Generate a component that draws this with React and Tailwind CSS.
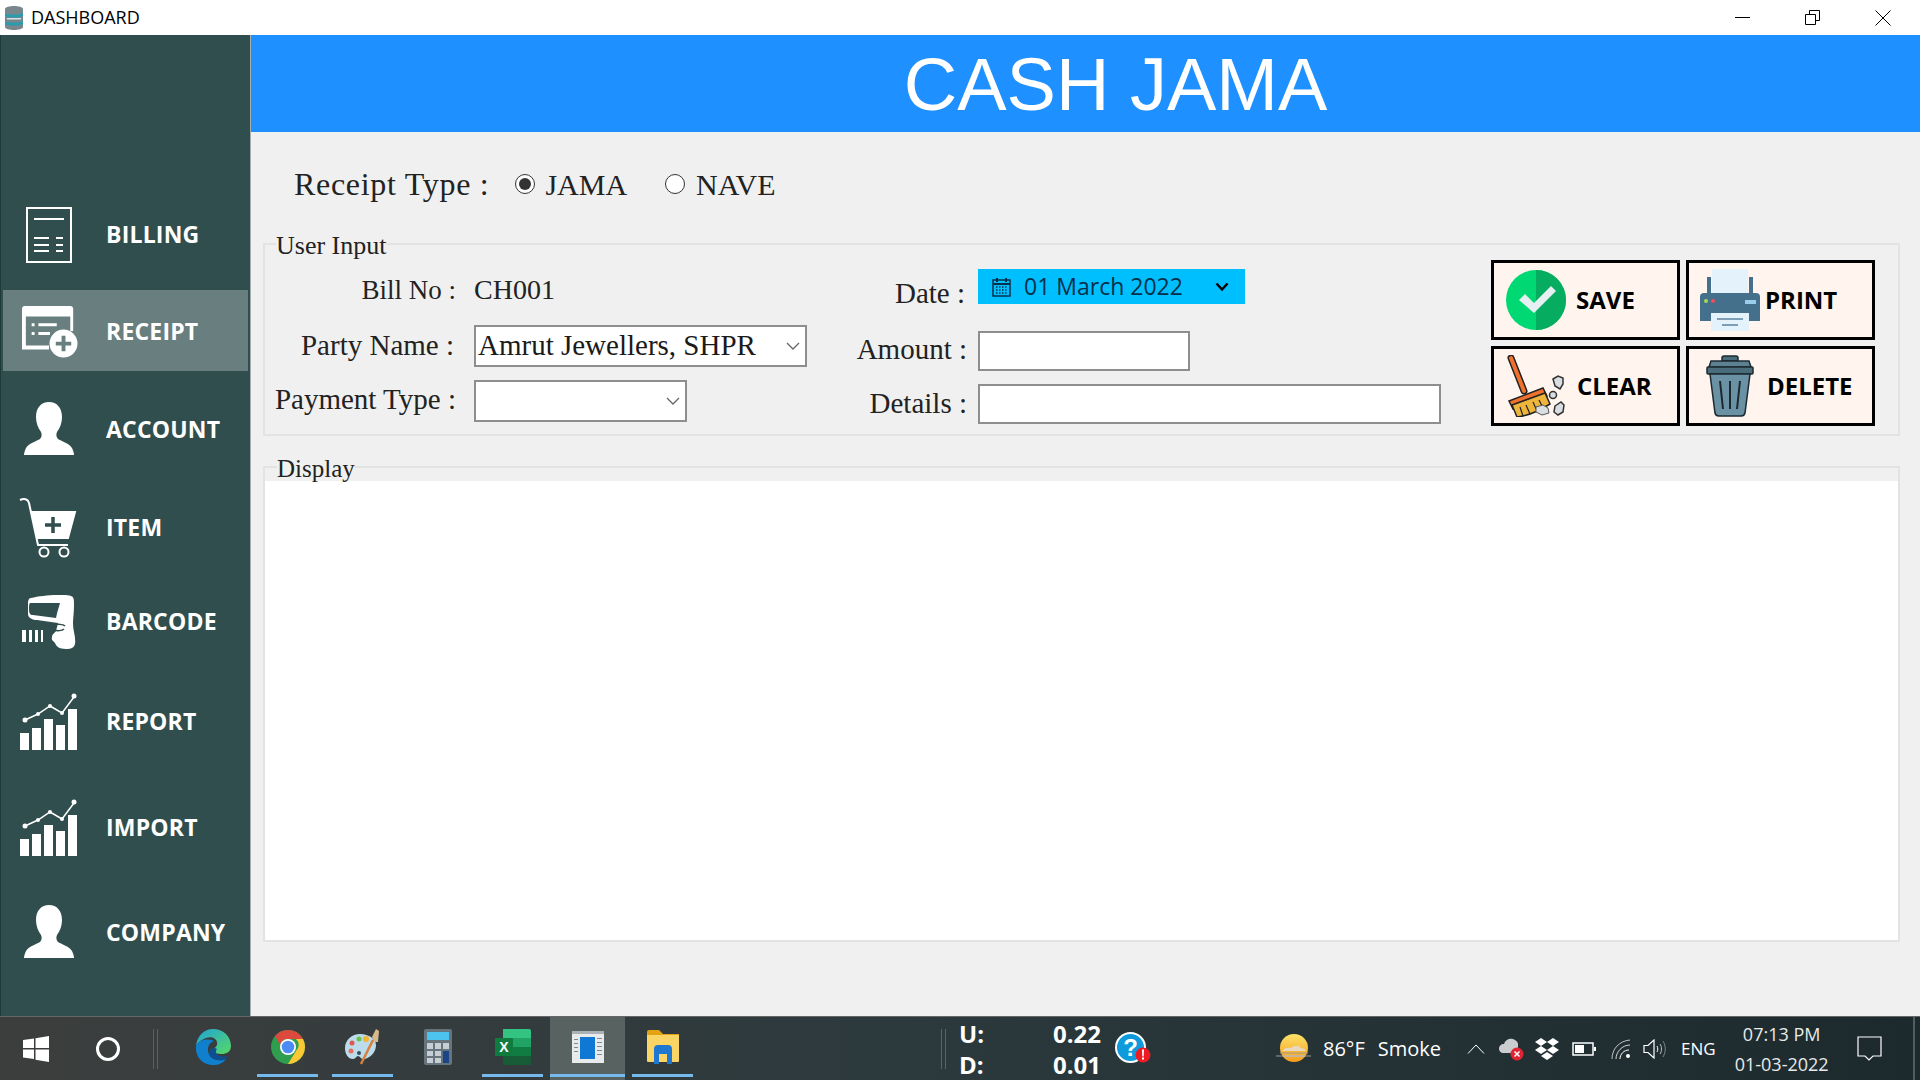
import React from 'react';

const sans = "font-['Open_Sans','Noto_Sans',sans-serif]";
const serif = "font-['Liberation_Serif',serif]";

// Sidebar icons
const BillingIcon = () => (
  <svg width="48" height="58" viewBox="0 0 48 58" fill="none" stroke="white">
    <rect x="2" y="2" width="44" height="54" strokeWidth="2" />
    <path d="M9 13h30M9 32h15M31 32h7M9 39h15M31 39h7M9 45h15M31 45h7" strokeWidth="2" />
  </svg>
);

const ReceiptIcon = () => (
  <svg className="ml-[2px]" width="56" height="54" viewBox="0 0 58 54" fill="white">
    <path d="M3 0h47a3 3 0 0 1 3 3v23h-3V11H4v30h24v4H0V3a3 3 0 0 1 3-3z" />
    <path d="M10 18h3v3h-3zM17 18h19v3H17zM10 27h3v3h-3zM17 27h12v3H17z" />
    <circle cx="43" cy="39" r="14.5" />
    <path d="M41 31h4v6h6v4h-6v6h-4v-6h-6v-4h6z" fill="#697e7e" />
  </svg>
);

const PersonIcon = () => (
  <svg className="-mt-[4px]" width="50" height="54" viewBox="0 0 50 54" fill="white">
    <path d="M25 1c8 0 13 6 13 15 0 6-2 11-5 15-1 2-1 5 1 7 3 2 11 4 14 9 1 2 2 5 2 7H0c0-2 1-5 2-7 3-5 11-7 14-9 2-2 2-5 1-7-3-4-5-9-5-15C12 7 17 1 25 1z" />
  </svg>
);

const CartIcon = () => (
  <svg width="60" height="62" viewBox="0 0 60 62" fill="none" stroke="white" strokeWidth="2">
    <path d="M1 3c4-2 8-1 9 3l9 42h30" />
    <path d="M13 15h43l-7 26H19z" fill="white" />
    <path d="M34 20v16M26 28h16" stroke="#314e4e" strokeWidth="3.5" />
    <circle cx="25" cy="55" r="4.5" />
    <circle cx="45" cy="55" r="4.5" />
  </svg>
);

const BarcodeIcon = () => (
  <svg width="56" height="54" viewBox="0 0 56 54" fill="white">
    <path d="M10 3c12-3 34-4 40-2 3 1 3 4 3 8 0 9-1 15-1 20 0 7 3 13 2 20-1 4-4 5-9 5-7 0-10-3-11-6-1-2-4-2-3-6 0-3 3-4 4-6l2-8-21-3c-4 0-9-2-9-6V8c0-3 1-5 3-5z" />
    <path d="M9 8c-1 1-1 3-1 6 0 4 1 6 4 6l23 3c1-6 3-11 4-15-8 0-22 0-30 0z" fill="#314e4e" />
    <path d="M33 30c3-1 9-1 11 1" stroke="#314e4e" strokeWidth="1.5" fill="none" />
    <path d="M33 35c3 1 8 1 10-1" stroke="#314e4e" strokeWidth="1.5" fill="none" />
    <path d="M1 35h4v12H1zM8 35h3v12H8zM14 35h3v12h-3zM20 35h2v12h-2z" />
  </svg>
);

const ChartIcon = () => (
  <svg width="60" height="58" viewBox="0 0 60 58" fill="white">
    <path d="M1 40h9v17H1zM13 35h9v22h-9zM25 26h9v31h-9zM37 32h9v25h-9zM49 16h9v41h-9z" />
    <path d="M6 27l13-6 12-8 12 7 12-16" fill="none" stroke="white" strokeWidth="1.5" />
    <circle cx="6" cy="27" r="2.5" />
    <circle cx="19" cy="21" r="2" />
    <circle cx="31" cy="13" r="2" />
    <circle cx="43" cy="20" r="2" />
    <circle cx="55" cy="3" r="2.5" />
  </svg>
);

// Button icons
const SaveIcon = () => (
  <svg width="60" height="60" viewBox="0 0 60 60">
    <circle cx="30" cy="30" r="30" fill="#00d873" />
    <path d="M30 0a30 30 0 0 1 0 60z" fill="#06ac5f" />
    <path d="M13 30l6-6 9 9 17-17 5 5-22 22z" fill="#e6f0f2" />
  </svg>
);

const PrintIcon = () => (
  <svg width="60" height="62" viewBox="0 0 60 62">
    <rect x="12" y="0" width="36" height="26" fill="#e4f2fc" />
    <path d="M7 8h4v18H7zM49 8h4v18h-4z" fill="#44708c" />
    <path d="M4 24h52a4 4 0 0 1 4 4v24H0V28a4 4 0 0 1 4-4z" fill="#44708c" />
    <rect x="45" y="31" width="11" height="4" fill="#9bcdec" />
    <circle cx="6" cy="32" r="2" fill="#a8d850" />
    <circle cx="13" cy="32" r="2" fill="#ef4d5a" />
    <rect x="11" y="44" width="38" height="18" fill="#e4f2fc" />
    <path d="M17 49h26v2H17zM22 55h16v2H22z" fill="#7d9fb6" />
  </svg>
);

const ClearIcon = () => (
  <svg width="60" height="62" viewBox="0 0 60 62">
    <path d="M5 3l13 33" stroke="#222" strokeWidth="7" strokeLinecap="round" />
    <path d="M5 3l13 33" stroke="#f0702d" strokeWidth="4" strokeLinecap="round" />
    <path d="M3 46l34-13 4 8-34 13z" fill="#f0702d" stroke="#222" strokeWidth="1.5" />
    <path d="M6 50l33-12 5 11c-8 5-22 12-33 13z" fill="#eeb53c" stroke="#222" strokeWidth="1.5" />
    <path d="M14 52l3 9M20 50l4 9M27 47l4 9M33 45l4 8" stroke="#222" strokeWidth="1.2" />
    <path d="M30 52l7-2 5 3 1 5-7 2-6-3z" fill="#d9dee2" stroke="#555" />
    <path d="M47 24l5-3 5 2 0 6-3 5-5-3z" fill="#d9dee2" stroke="#333" strokeWidth="1.5" />
    <circle cx="47" cy="40" r="3.5" fill="#d9dee2" stroke="#333" strokeWidth="1.5" />
    <path d="M49 51l6-4 3 3-1 7-5 3-4-3z" fill="#d9dee2" stroke="#333" strokeWidth="1.5" />
  </svg>
);

const DeleteIcon = () => (
  <svg width="48" height="62" viewBox="0 0 48 62" stroke="#1c2a30" strokeWidth="1.5">
    <path d="M16 6V3a2 2 0 0 1 2-2h12a2 2 0 0 1 2 2v3z" fill="#4a6d7c" />
    <path d="M5 6h38l2 6H3z" fill="#5d8191" />
    <rect x="1" y="12" width="46" height="7" rx="1" fill="#4a6d7c" />
    <path d="M4 19h40l-5 39a4 4 0 0 1-4 3H13a4 4 0 0 1-4-3z" fill="#6a92a4" />
    <path d="M14 26l3 28M24 26v28M34 26l-3 28" fill="none" strokeWidth="2" />
  </svg>
);

// Taskbar icons
const WindowsIcon = () => (
  <svg width="26" height="26" viewBox="0 0 26 26" fill="white">
    <path d="M0 4l11-1.5V12H0zM12.500 2.300L26 0v12H12.500zM0 13.500h11V23L0 21.500zM12.500 13.500H26V26l-13.500-2.300z" />
  </svg>
);

const EdgeIcon = () => (
  <svg width="36" height="36" viewBox="0 0 36 36">
    <defs>
      <linearGradient id="edgeTop" x1="0" y1="0" x2="1" y2="1">
        <stop offset="0" stopColor="#1fa3d8" />
        <stop offset="1" stopColor="#57d964" />
      </linearGradient>
    </defs>
    <path d="M1 17C2 7 9 0 18 0c10 0 18 7 18 17 0 6-5 8-9 8-5 0-8-1-8-4 0-3 4-3 3-8-1-4-6-6-11-4C6 11 2 14 1 17z" fill="url(#edgeTop)" />
    <path d="M1 17c-1 10 6 19 17 19 6 0 10-2 13-6-5 2-12 2-16-3-4-6-2-13 4-15C12 9 3 11 1 17z" fill="#0f7fce" />
    <path d="M15 27c4 5 11 5 16 3l2-3c-3 1-8 1-10-1-2-1-3-4-1-6-4-3-10 1-7 7z" fill="#0e4f91" />
  </svg>
);

const ChromeIcon = () => (
  <svg width="34" height="34" viewBox="0 0 34 34">
    <circle cx="17" cy="17" r="17" fill="#2f9e4f" />
    <path d="M17 0a17 17 0 0 1 15 9H17a8 8 0 0 0-8 6L4 6A17 17 0 0 1 17 0z" fill="#dc4a3d" />
    <path d="M32 9a17 17 0 0 1-15 25l8-13a8 8 0 0 0 0-12z" fill="#fbc934" />
    <circle cx="17" cy="17" r="8" fill="white" />
    <circle cx="17" cy="17" r="6.300" fill="#4c8bf5" />
  </svg>
);

const PaintIcon = () => (
  <svg width="36" height="36" viewBox="0 0 36 36">
    <path d="M15 5C7 5 0 11 0 19c0 6 3 11 8 11 3 0 3-3 5-3s3 4 7 3c7-2 11-8 11-14 0-6-7-11-16-11z" fill="#bcdcec" />
    <circle cx="7" cy="14" r="2.500" fill="#e0584c" />
    <circle cx="14" cy="10" r="2.500" fill="#6cc24a" />
    <circle cx="21" cy="10" r="3" fill="#f2b632" />
    <circle cx="6" cy="22" r="2.500" fill="#ea6e5f" />
    <circle cx="14" cy="24" r="2" fill="#33505c" />
    <path d="M16 35l12-24" stroke="#d9803a" strokeWidth="2.500" />
    <path d="M27 8l4-8 3 2-1 11-3 0z" fill="#d8b98a" />
  </svg>
);

const CalcIcon = () => (
  <svg width="28" height="36" viewBox="0 0 28 36">
    <rect width="28" height="36" rx="2" fill="#66747e" />
    <rect x="3" y="3" width="22" height="8" fill="#4cc2ee" />
    <path d="M3 14h6v6H3zM11 14h6v6h-6zM19 14h6v6h-6zM3 22h6v5H3zM11 22h6v5h-6zM3 29h6v5H3zM11 29h6v5h-6z" fill="#c6ced3" />
    <rect x="19" y="22" width="6" height="12" fill="#1c4587" />
  </svg>
);

const ExcelIcon = () => (
  <svg width="36" height="36" viewBox="0 0 36 36">
    <path d="M8 0h26a2 2 0 0 1 2 2v7H8z" fill="#33c481" />
    <rect x="8" y="9" width="14" height="9" fill="#21a366" />
    <rect x="22" y="9" width="14" height="9" fill="#21a366" />
    <rect x="8" y="18" width="28" height="9" fill="#107c41" />
    <path d="M8 27h28v7a2 2 0 0 1-2 2H10a2 2 0 0 1-2-2z" fill="#185c37" />
    <rect x="0" y="9" width="18" height="18" rx="1" fill="#0f7b3e" />
    <text x="9" y="23" textAnchor="middle" fill="white" fontSize="14" fontWeight="700" fontFamily="Liberation Sans">X</text>
  </svg>
);

const WindowAppIcon = () => (
  <svg width="32" height="32" viewBox="0 0 32 32">
    <rect width="32" height="32" fill="#e8eaec" />
    <rect y="0" width="32" height="3" fill="#aab2b8" />
    <rect x="8" y="6" width="15" height="22" fill="#0f78d4" />
    <path d="M2 8h4v1H2zM2 12h4v1H2zM2 16h4v1H2zM2 20h4v1H2zM25 7h5v1h-5zM25 11h5v1h-5zM25 15h5v1h-5zM25 19h5v1h-5zM25 23h5v1h-5z" fill="#7e8a92" />
  </svg>
);

const FolderIcon = () => (
  <svg width="32" height="36" viewBox="0 0 32 36">
    <path d="M0 3a2 2 0 0 1 2-2h10l4 4h16v4H0z" fill="#e2a312" />
    <path d="M0 6h32v26a1 1 0 0 1-1 1H1a1 1 0 0 1-1-1z" fill="#fad465" />
    <path d="M7 35V20a4 4 0 0 1 4-4h10a4 4 0 0 1 4 4v15h-5v-10h-8v10z" fill="#1e78d2" />
  </svg>
);

const HelpIcon = () => (
  <svg width="36" height="34" viewBox="0 0 36 34">
    <circle cx="15.500" cy="15.500" r="14.500" fill="#0d9bdc" stroke="white" strokeWidth="2" />
    <text x="15.500" y="24" textAnchor="middle" fill="white" fontSize="24" fontWeight="700" fontFamily="Liberation Sans">?</text>
    <circle cx="28" cy="23" r="7.500" fill="#ec1c24" />
    <path d="M27 17.500h2l-.3 7h-1.400zM27 25.500h2v2h-2z" fill="white" />
  </svg>
);

const WeatherIcon = () => (
  <svg width="36" height="30" viewBox="0 0 36 30">
    <defs>
      <linearGradient id="sunFill" x1="0" y1="0" x2="0" y2="1">
        <stop offset="0" stopColor="#fde26a" />
        <stop offset="1" stopColor="#f59e1a" />
      </linearGradient>
    </defs>
    <circle cx="18" cy="14" r="14" fill="url(#sunFill)" />
    <path d="M6 17c2-3 6-4 9-3 3-3 8-3 10 0 2 0 4 1 5 3z" fill="#e8d8c0" />
    <path d="M0 22h35M4 19h28" stroke="#a89a88" strokeWidth="1" />
    <path d="M7 21h22v2H7z" fill="#c8b49a" />
  </svg>
);

const CloudErrorIcon = () => (
  <svg width="26" height="24" viewBox="0 0 26 24">
    <path d="M0 12c0-3 2-5 5-5 1-4 5-6 9-5 3 1 5 3 5 5v9H4c-2 0-4-2-4-4z" fill="#c9cdcf" />
    <circle cx="18" cy="17" r="6.500" fill="#e02434" />
    <path d="M15.500 14.500l5 5M20.500 14.500l-5 5" stroke="white" strokeWidth="1.500" />
  </svg>
);

const DropboxIcon = () => (
  <svg width="24" height="22" viewBox="0 0 24 22" fill="white">
    <path d="M6 0l6 4-6 4-6-4zM18 0l6 4-6 4-6-4zM6 8l6 4-6 4-6-4zM18 8l6 4-6 4-6-4zM12 14l6 4-6 4-6-4z" />
  </svg>
);

const BatteryIcon = () => (
  <svg width="24" height="14" viewBox="0 0 24 14">
    <rect x="1" y="1" width="20" height="12" fill="none" stroke="white" strokeWidth="1.500" />
    <rect x="3" y="3" width="9" height="8" fill="white" />
    <rect x="22" y="5" width="2" height="4" fill="white" />
  </svg>
);

const WifiIcon = () => (
  <svg width="20" height="20" viewBox="0 0 20 20" fill="none" stroke="white">
    <path d="M1 20C1 10 8 2 19 1" opacity=".7" />
    <path d="M5 20c0-7 6-14 14-14" opacity=".8" />
    <path d="M9 20c0-5 4-9 9-9" />
    <circle cx="17" cy="17" r="2" fill="white" stroke="none" />
  </svg>
);

const VolumeIcon = () => (
  <svg width="24" height="20" viewBox="0 0 24 20" fill="none" stroke="white">
    <path d="M1 6.500h4L11 1v18l-6-5.500H1z" strokeWidth="1.200" />
    <path d="M14 7c1 2 1 4 0 6" />
    <path d="M17 5c2 3 2 7 0 10" opacity=".7" />
    <path d="M20 2c3 5 3 11 0 16" opacity=".4" />
  </svg>
);

const menu = [
  { label: 'BILLING', icon: <BillingIcon />, cls: 'h-[98px] mb-[6px]' },
  { label: 'RECEIPT', icon: <ReceiptIcon />, cls: 'h-[81px] bg-[#697e7e] pt-[2px]' },
  { label: 'ACCOUNT', icon: <PersonIcon />, cls: 'h-[118px]' },
  { label: 'ITEM', icon: <CartIcon />, cls: 'h-[78px]' },
  { label: 'BARCODE', icon: <BarcodeIcon />, cls: 'h-[110px]' },
  { label: 'REPORT', icon: <ChartIcon />, cls: 'h-[90px]' },
  { label: 'IMPORT', icon: <ChartIcon />, cls: 'h-[122px]' },
  { label: 'COMPANY', icon: <PersonIcon />, cls: 'h-[88px]' },
];

const Sidebar = () => (
  <aside className="w-[251px] shrink-0 bg-[#314e4e] border-l border-l-[#1f3a3a] border-r border-r-[#a6adad] pt-[151px] px-[2px]">
    {menu.map((item) => (
      <div key={item.label} className={`flex items-center ${item.cls}`}>
        <div className="w-[91px] flex justify-center shrink-0 mr-[12px]">{item.icon}</div>
        <span className={`${sans} text-[23px] tracking-[0.2px] font-bold text-white -mt-[1px]`}>{item.label}</span>
      </div>
    ))}
  </aside>
);

const Radio = ({ checked }) => (
  <span className="w-[20px] h-[20px] rounded-full border border-[#333] bg-white flex items-center justify-center shrink-0">
    {checked && <span className="w-[12px] h-[12px] rounded-full bg-[#333]" />}
  </span>
);

const Chevron = () => (
  <svg width="14" height="8" viewBox="0 0 14 8" fill="none" stroke="#666" strokeWidth="1.300">
    <path d="M1 1l6 6 6-6" />
  </svg>
);

const SelectBox = ({ value, widthCls }) => (
  <div className={`${widthCls} h-[42px] border-2 border-[#8e8e8e] bg-white flex items-center justify-between pl-[2px] pr-[5px] text-[29px] text-[#1a1a1a]`}>
    <span className="whitespace-nowrap">{value}</span>
    <Chevron />
  </div>
);

const ActionButton = ({ label, icon, iconCls, gapCls }) => (
  <button className="h-[80px] border-[3px] border-black bg-[#fff4ee] flex items-center">
    <span className={`flex justify-center shrink-0 ${iconCls}`}>{icon}</span>
    <span className={`${sans} text-[24px] font-bold text-black ${gapCls}`}>{label}</span>
  </button>
);

const UserInput = () => (
  <fieldset className="h-[206px] border-2 border-[#e3e3e3] px-[9px] flex">
    <legend className="relative top-[2px] ml-[2px] text-[26px] leading-[28px] text-[#222]">User Input</legend>
    <div className="flex w-full">
      <div className="w-[533px] shrink-0 text-[29px] text-[#222] grid grid-cols-[182px_1fr] gap-x-[18px] content-start pt-[11px]">
        <div className="h-[42px] flex items-center justify-end text-[27px]">Bill No :</div>
        <div className="h-[42px] flex items-center text-[28px]">CH001</div>
        <div className="h-[42px] mt-[14px] flex items-center justify-end pr-[2px]">Party Name :</div>
        <div className="mt-[14px]"><SelectBox value="Amrut Jewellers, SHPR" widthCls="w-[333px]" /></div>
        <div className="h-[42px] mt-[13px] pb-[3px] flex items-center justify-end whitespace-nowrap">Payment Type :</div>
        <div className="mt-[13px]"><SelectBox value="" widthCls="w-[213px]" /></div>
      </div>

      <div className="ml-[40px] w-[595px] shrink-0 text-[29px] text-[#222] grid grid-cols-[120px_1fr] gap-x-[11px] content-start pt-[11px]">
        <div className="h-[36px] mt-[7px] flex items-center justify-end pr-[2px]">Date :</div>
        <div className={`${sans} w-[267px] h-[35px] bg-[#00bfff] flex items-center pl-[14px] pr-[16px] text-[23px] text-[#06304a]`}>
          <svg width="19" height="20" viewBox="0 0 19 20" fill="none" stroke="#06304a" strokeWidth="1.500">
            <rect x="1" y="3" width="17" height="16" />
            <path d="M1 7h17M5 1v4M14 1v4" strokeWidth="2" />
            <path d="M4 10h11M4 13h11M4 16h11" strokeDasharray="1.500 1.500" />
          </svg>
          <span className="ml-[13px]">01 March 2022</span>
          <svg className="ml-auto" width="14" height="10" viewBox="0 0 14 10" fill="none" stroke="black" strokeWidth="2.500">
            <path d="M1.500 1.500L7 7.500l5.500-6" />
          </svg>
        </div>
        <div className="h-[40px] mt-[19px] pb-[2px] flex items-center justify-end">Amount :</div>
        <div className="mt-[19px] w-[212px] h-[40px] border-2 border-[#8e8e8e] bg-white" />
        <div className="h-[40px] mt-[13px] flex items-center justify-end">Details :</div>
        <div className="mt-[13px] w-[463px] h-[40px] border-2 border-[#8e8e8e] bg-white" />
      </div>

      <div className="ml-[49px] grid grid-cols-[189px_189px] gap-x-[6px] gap-y-[6px] content-start pt-[2px]">
        <ActionButton label="SAVE" icon={<SaveIcon />} iconCls="ml-[12px]" gapCls="ml-[10px]" />
        <ActionButton label="PRINT" icon={<PrintIcon />} iconCls="ml-[11px]" gapCls="ml-[5px]" />
        <ActionButton label="CLEAR" icon={<ClearIcon />} iconCls="ml-[12px]" gapCls="ml-[11px]" />
        <ActionButton label="DELETE" icon={<DeleteIcon />} iconCls="ml-[17px]" gapCls="ml-[13px]" />
      </div>
    </div>
  </fieldset>
);

const Display = () => (
  <fieldset className="h-[489px] mt-[17px] border-2 border-[#e3e3e3] flex">
    <legend className="ml-[12px] text-[25px] leading-[28px] text-[#222] relative top-[2px]">Display</legend>
    <div className="w-full h-full bg-white" />
  </fieldset>
);

const Taskbar = () => (
  <footer className={`${sans} h-[64px] shrink-0 bg-linear-to-r from-[#3c3e3d] via-[#2b393d] to-[#1c2a2e] border-t border-[#666] flex items-center text-white`}>
    <div className="w-[72px] flex justify-center"><WindowsIcon /></div>
    <div className="w-[72px] flex justify-center">
      <span className="w-[24px] h-[24px] rounded-full border-[3px] border-white" />
    </div>
    <span className="w-[5px] h-[40px] border-x border-[#5c6262] ml-[9px]" />
    <div className="ml-[17px] flex h-full">
      {[
        { icon: <EdgeIcon /> },
        { icon: <ChromeIcon />, open: true },
        { icon: <PaintIcon />, open: true },
        { icon: <CalcIcon /> },
        { icon: <ExcelIcon />, open: true },
        { icon: <WindowAppIcon />, open: true, active: true },
        { icon: <FolderIcon />, open: true },
      ].map((t, i) => (
        <div key={i} className={`w-[75px] h-full flex flex-col items-center justify-end ${t.active ? 'bg-[#586361]' : ''}`}>
          <div className="flex-1 flex items-center justify-center pt-[2px]">{t.icon}</div>
          <span className={`h-[3px] mb-[3px] ${t.active ? 'w-full bg-[#76b9ed]' : t.open ? 'w-[61px] bg-[#76b9ed]' : 'w-[61px]'}`} />
        </div>
      ))}
    </div>

    <span className="ml-[241px] w-[5px] h-[40px] border-x border-[#5c6262]" />
    <div className="ml-[13px] w-[142px] grid grid-cols-2 text-[24px] leading-[31px] font-bold">
      <span>U:</span><span className="text-right">0.22</span>
      <span>D:</span><span className="text-right">0.01</span>
    </div>
    <div className="ml-[14px]"><HelpIcon /></div>
    <div className="ml-[125px]"><WeatherIcon /></div>
    <span className="ml-[11px] text-[20px]">86°F</span>
    <span className="ml-[13px] text-[20px]">Smoke</span>
    <svg className="ml-[26px]" width="18" height="10" viewBox="0 0 18 10" fill="none" stroke="white">
      <path d="M1 9.500L9 1l8 8.500" />
    </svg>
    <div className="ml-[14px]"><CloudErrorIcon /></div>
    <div className="ml-[10px]"><DropboxIcon /></div>
    <div className="ml-[13px]"><BatteryIcon /></div>
    <div className="ml-[15px]"><WifiIcon /></div>
    <div className="ml-[12px]"><VolumeIcon /></div>
    <span className="ml-[14px] text-[17px]">ENG</span>
    <div className="ml-[19px] w-[94px] text-center text-[18px] leading-[30px] whitespace-nowrap text-[#e8eaea]">
      <div>07:13 PM</div>
      <div>01-03-2022</div>
    </div>
    <svg className="ml-[28px]" width="25" height="26" viewBox="0 0 25 26" fill="none" stroke="white" strokeWidth="1.200">
      <path d="M1 1h23v19h-8l-4 4-4-4H1z" />
    </svg>
    <span className="ml-auto w-[7px] h-full border-l-2 border-[#555c5e]" />
  </footer>
);

export default function App() {
  return (
    <div className={`${serif} w-[1920px] h-[1080px] overflow-hidden flex flex-col bg-[#f0f0f0]`}>
      <header className={`${sans} h-[35px] shrink-0 bg-white flex items-center pl-[5px]`}>
        <svg width="18" height="24" viewBox="0 0 18 24">
          <path d="M0 3c0-4 18-4 18 0v18c0 4-18 4-18 0z" fill="#79878d" />
          <path d="M0 7c3 2 15 2 18 0v3c-3 2-15 2-18 0zM0 15c3 2 15 2 18 0v3c-3 2-15 2-18 0z" fill="#2a9cb0" />
          <path d="M2 12h14v1.500H2z" fill="#d9e0e2" />
        </svg>
        <span className="ml-[8px] text-[18px] text-black">DASHBOARD</span>
        <div className="ml-auto flex items-center pr-[29px] gap-[55px]">
          <span className="w-[15px] h-[1px] bg-black" />
          <svg width="15" height="15" viewBox="0 0 15 15" fill="none" stroke="black">
            <path d="M.5 4.500h10v10H.5zM4.500 4.500V.5h10v10h-4" />
          </svg>
          <svg width="16" height="16" viewBox="0 0 16 16" fill="none" stroke="black">
            <path d="M.5.5l15 15M15.500.5l-15 15" />
          </svg>
        </div>
      </header>
      <div className="flex h-[981px] shrink-0">
        <Sidebar />
        <main className="flex-1 flex flex-col">
          <div className="h-[97px] shrink-0 bg-[#1e90ff] flex items-center justify-center pl-[60px] pt-[1px]">
            <h1 className="font-['Liberation_Sans',sans-serif] text-[74px] text-white">CASH JAMA</h1>
          </div>
          <div className="flex-1 px-[12px] pr-[20px]">
            <div className="h-[98px] flex items-center pl-[31px] text-[#222] pt-[6px]">
              <span className="text-[32px] tracking-[0.7px]">Receipt Type :</span>
              <span className="ml-[26px]"><Radio checked /></span>
              <span className="ml-[10px] text-[30px]">JAMA</span>
              <span className="ml-[38px]"><Radio /></span>
              <span className="ml-[11px] text-[30px]">NAVE</span>
            </div>
            <UserInput />
            <Display />
          </div>
        </main>
      </div>
      <Taskbar />
    </div>
  );
}
